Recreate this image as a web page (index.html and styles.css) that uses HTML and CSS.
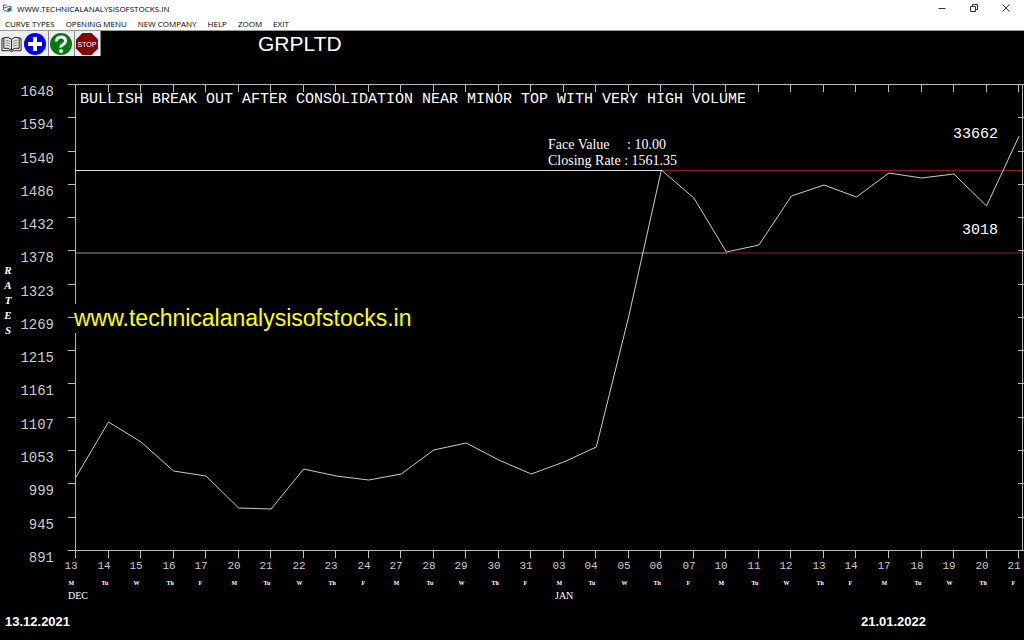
FILE: index.html
```html
<!DOCTYPE html>
<html lang="en">
<head>
  <meta charset="utf-8">
  <title>WWW.TECHNICALANALYSISOFSTOCKS.IN</title>
  <link rel="stylesheet" href="styles.css">
</head>
<body>
  <header class="titlebar">
    <svg class="appicon" viewBox="0 0 10 10" width="10" height="10" aria-hidden="true">
      <path d="M1 2h4M1.5 2v5l5 2M2 5l3 -1M5 4l4 -1v5" fill="none" stroke="#667" />
      <path d="M5 6l4 -2v4l-3 1z" fill="#187878" />
    </svg>
    <span class="caption">WWW.TECHNICALANALYSISOFSTOCKS.IN</span>
    <button class="winbtn" aria-label="Minimize"><svg viewBox="0 0 10 10" width="10" height="10"><path d="M1.5 5.5h7" /></svg></button>
    <button class="winbtn" aria-label="Restore"><svg viewBox="0 0 10 10" width="10" height="10"><path d="M1.5 3.5h5v5h-5zM3.5 3v-1.5h5v5h-1.5" /></svg></button>
    <button class="winbtn" aria-label="Close"><svg viewBox="0 0 10 10" width="10" height="10"><path d="M1.5 1.5l7 7M8.5 1.5l-7 7" /></svg></button>
  </header>

  <nav class="menubar">
    <button>CURVE TYPES</button>
    <button>OPENING MENU</button>
    <button>NEW COMPANY</button>
    <button>HELP</button>
    <button>ZOOM</button>
    <button>EXIT</button>
  </nav>

  <div class="toolbar">
    <button class="book" aria-label="Open book">
      <svg viewBox="0 0 24 24" width="23" height="24">
        <path d="M2 6.5l2 -1q5 -1.5 8 1.5q3 -3 8 -1.5l2 1v12.5h-8l-2 1l-2 -1h-8z" fill="#e4e4e4" stroke="#222" />
        <path d="M4 5.5v11q5 -1 8 2q3 -3 8 -2v-11M12 7v11.5" fill="none" stroke="#222" />
        <path d="M6 8.5q3 -.5 4.5 1M6 11q3 -.5 4.5 1M6 13.5q3 -.5 4.5 1M13.5 9.5q2 -1.5 4.5 -1M13.5 12q2 -1.5 4.5 -1M13.5 14.5q2 -1.5 4.5 -1" fill="none" stroke="#888" />
      </svg>
    </button>
    <button aria-label="Add">
      <svg viewBox="0 0 24 24" width="24" height="24">
        <circle cx="12" cy="12" r="11" fill="#0000f0" />
        <path d="M12 5v14M5 12h14" stroke="#fff" stroke-width="4" />
      </svg>
    </button>
    <button aria-label="Help">
      <svg viewBox="0 0 24 24" width="24" height="24">
        <circle cx="12" cy="12" r="11" fill="#007a10" />
        <path d="M7.5 9.5q0 -4.5 4.5 -4.5t4.5 4q0 2 -2.5 3.5t-2 3" fill="none" stroke="#fff" stroke-width="3" />
        <circle cx="12" cy="19" r="2" fill="#fff" />
      </svg>
    </button>
    <button aria-label="Stop">
      <svg viewBox="0 0 24 24" width="24" height="24">
        <path d="M7.5 1h9l6.5 6.5v9l-6.5 6.5h-9l-6.5 -6.5v-9z" fill="#850008" />
        <text class="stop" x="12" y="15">STOP</text>
      </svg>
    </button>
    <h1>GRPLTD</h1>
  </div>

  <svg class="chart" viewBox="0 0 1024 546" role="img" aria-label="GRPLTD closing rates">
    <g id="grid" class="axis"></g>
    <path class="level" d="M76 114.5H662" />
    <path class="level dim" d="M76 197H727" />
    <path class="level red" d="M662 114.5H1022M727 197H1022" />
    <polyline id="curve" class="curve" />
    <g id="rates" class="rates"></g>
    <g id="days"></g>
    <text class="month" x="68" y="543">DEC</text>
    <text class="month" x="555" y="543">JAN</text>
    <g class="side">
      <text x="8" y="218">R</text>
      <text x="8" y="233">A</text>
      <text x="8" y="248">T</text>
      <text x="8" y="263">E</text>
      <text x="8" y="278">S</text>
    </g>
    <text class="signal" x="80" y="47">BULLISH BREAK OUT AFTER CONSOLIDATION NEAR MINOR TOP WITH VERY HIGH VOLUME</text>
    <text class="info" x="548" y="93">Face Value     : 10.00</text>
    <text class="info" x="548" y="109">Closing Rate : 1561.35</text>
    <text class="volume" x="953" y="82">33662</text>
    <text class="volume" x="962" y="178">3018</text>
    <rect x="75" y="248" width="336" height="29" />
    <text class="site" x="74" y="270">www.technicalanalysisofstocks.in</text>
  </svg>

  <footer class="range">
    <span>13.12.2021</span>
    <span>21.01.2022</span>
  </footer>

  <script src="chart.js"></script>
</body>
</html>
```

FILE: styles.css
```css
body {
  margin: 0;
  background: #000;
  color: #fff;
  font-family: "Liberation Sans", Arial, sans-serif;
}

button {
  padding: 0;
  border: none;
  background: none;
  color: inherit;
  font: inherit;
}

.titlebar {
  display: flex;
  align-items: center;
  height: 16px;
  padding: 0 2px;
  background: #fff;
  color: #000;
  font: 8px "Open Sans", sans-serif;
}

.caption {
  flex: 1;
  margin-left: 5px;
}

.winbtn {
  display: flex;
  justify-content: center;
  width: 32px;
}

.winbtn path {
  fill: none;
  stroke: #333;
}

.menubar {
  display: flex;
  gap: 11px;
  height: 14px;
  padding-left: 5px;
  border-bottom: 1px solid #999;
  background: #fff;
  color: #000;
  font: 8px "Open Sans", sans-serif;
}

.toolbar {
  display: flex;
  align-items: center;
  height: 25px;
}

.toolbar button {
  box-sizing: border-box;
  width: 26px;
  height: 25px;
  border-right: 1px solid #888;
  background: #eee;
}

.toolbar .book {
  width: 23px;
  border-right: none;
}

.toolbar svg {
  display: block;
}

.stop {
  fill: #fff;
  font: 7px "Liberation Sans", Arial, sans-serif;
  text-anchor: middle;
}

h1 {
  margin: 0 0 0 157px;
  font: 21px "Liberation Sans", Arial, sans-serif;
}

.chart {
  display: block;
  width: 100%;
}

.chart text {
  fill: #fff;
  white-space: pre;
}

.axis {
  stroke: #bbb;
  shape-rendering: crispEdges;
}

.level {
  stroke: #ddd;
}

.level.dim {
  stroke: #999;
}

.level.red {
  stroke: #951a1e;
}

.curve {
  fill: none;
  stroke: #ccc;
}

.rates {
  font: 14px "Liberation Mono", monospace;
  text-anchor: end;
}

.chart .rates text,
.chart .date {
  fill: #ccc;
}

.date {
  font: 11px "Liberation Mono", monospace;
}

.weekday {
  font: bold 6px "Liberation Serif", serif;
}

.month {
  font: 10px "Liberation Serif", serif;
}

.side {
  font: italic bold 11px "Liberation Serif", serif;
  text-anchor: middle;
}

.signal,
.volume {
  font: 15px "Liberation Mono", monospace;
}

.info {
  font: 14px "Liberation Serif", serif;
}

.chart .site {
  fill: #ff0;
  font: 23px "Liberation Sans", Arial, sans-serif;
}

.range {
  display: grid;
  grid-template-columns: 84% 16%;
  padding: 12px 0 0 5px;
  font: bold 13px "Liberation Sans", Arial, sans-serif;
}
```

FILE: chart.js
```js
const NS = 'http://www.w3.org/2000/svg';
const LEFT = 75.5, TOP = 28.5, STEP_X = 32.52, STEP_Y = 33.27;

const rates = [1648, 1594, 1540, 1486, 1432, 1378, 1323, 1269, 1215, 1161, 1107, 1053, 999, 945, 891];
const days = ['13', '14', '15', '16', '17', '20', '21', '22', '23', '24', '27', '28', '29', '30', '31',
  '03', '04', '05', '06', '07', '10', '11', '12', '13', '14', '17', '18', '19', '20', '21'];
const week = ['M', 'Tu', 'W', 'Th', 'F'];
const curve = [421, 366, 386, 415, 420, 452, 453, 413, 420, 424, 418, 394, 387, 404, 418,
  406, 391, 260, 114, 142, 196, 189, 140, 129, 141, 117, 122, 118, 150, 80];

function add(parent, tag, attrs, text) {
  const el = document.createElementNS(NS, tag);
  Object.keys(attrs).forEach(key => el.setAttribute(key, attrs[key]));
  if (text) el.textContent = text;
  document.getElementById(parent).appendChild(el);
}

// frame
add('grid', 'path', { d: 'M68 28.5H1024M68 494.5H1024M75.5 28V495M1022.5 28V495' });

rates.forEach((rate, i) => {
  const y = Math.round(TOP + i * STEP_Y - 0.5) + 0.5;
  add('grid', 'path', { d: `M68 ${y}H75M1018 ${y}H1024` });
  add('rates', 'text', { x: 54, y: y + 11 }, rate);
});

days.forEach((day, i) => {
  const x = Math.round(LEFT + i * STEP_X - 0.5) + 0.5;
  add('grid', 'path', { d: `M${x} 28V36M${x} 494V502` });
  add('days', 'text', { class: 'date', x: x - 11, y: 513 }, day);
  add('days', 'text', { class: 'weekday', x: x - 7, y: 529 }, week[i % 5]);
});

document.getElementById('curve').setAttribute('points',
  curve.map((y, i) => `${76 + i * STEP_X},${y}`).join(' '));
```
